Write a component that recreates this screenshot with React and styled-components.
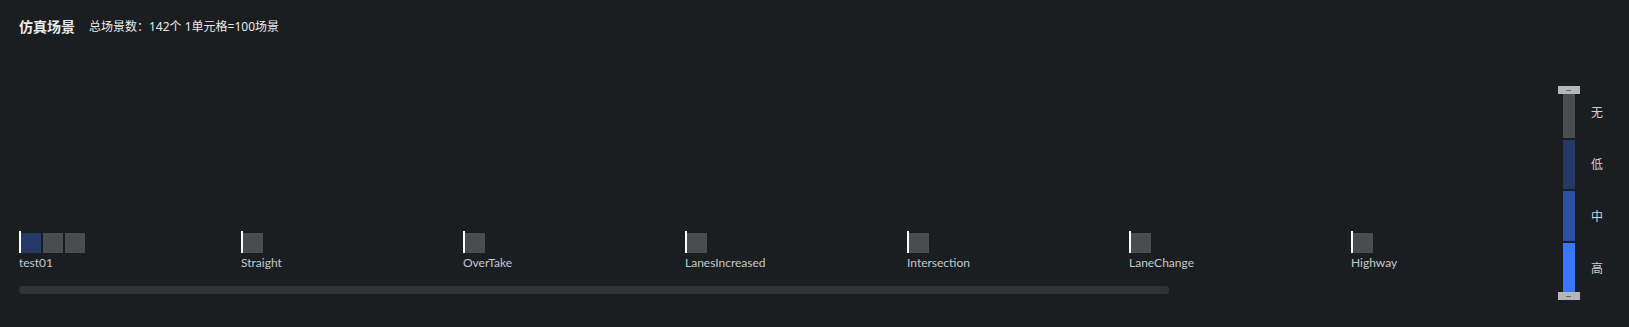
import React from 'react';
import styled, { createGlobalStyle } from 'styled-components';

const GlobalStyle = createGlobalStyle`
  body {
    margin: 0;
    background: #1b1e21;
    font-family: "Noto Sans", "Noto Sans CJK SC", sans-serif;
  }
`;

const Page = styled.div`
  padding: 17px 26px 0 19px;
  box-sizing: border-box;
  width: 100%;
  height: 327px;
  background: #1b1e21;
`;

const Header = styled.div`
  display: flex;
  align-items: center;
  height: 18px;
  gap: 14px;
  color: #e8eaec;
`;

const Title = styled.span`
  font-size: 14px;
  font-weight: 600;
`;

const Summary = styled.span`
  font-size: 12px;
`;

const Body = styled.div`
  display: flex;
  align-items: flex-end;
  height: 265px;
  gap: 20px;
`;

const Track = styled.div`
  flex: 1;
  min-width: 0;
  padding-bottom: 6px;
`;

const ItemRow = styled.div`
  display: flex;
  overflow: hidden;
`;

const Item = styled.div`
  flex: 0 0 222px;
  display: flex;
  flex-direction: column;
`;

const Cells = styled.div`
  display: flex;
  align-items: flex-end;
  height: 22px;
  gap: 2px;
`;

const Marker = styled.div`
  width: 2px;
  height: 22px;
  background: #ffffff;
  margin-right: -2px;
`;

const Cell = styled.div`
  width: 20px;
  height: 20px;
  background: ${p => p.$color};
`;

const ItemLabel = styled.div`
  margin-top: 2px;
  font-family: Lato, "Noto Sans", sans-serif;
  font-size: 12px;
  line-height: 16px;
  color: #c3c8cd;
`;

const ScrollBar = styled.div`
  margin-top: 15px;
  width: 1150px;
  height: 8px;
  border-radius: 4px;
  background: #2f3336;
`;

const Legend = styled.div`
  display: flex;
  gap: 11px;
`;

const Slider = styled.div`
  width: 22px;
  display: flex;
  flex-direction: column;
  align-items: center;
`;

const Handle = styled.div`
  width: 22px;
  height: 8px;
  background: #b6b6b6;
  display: flex;
  align-items: center;
  justify-content: center;
  &::after {
    content: '';
    width: 5px;
    height: 1px;
    background: #6a6a6a;
  }
`;

const Bar = styled.div`
  width: 12px;
  display: flex;
  flex-direction: column;
  gap: 2px;
`;

const Segment = styled.div`
  height: ${p => p.$h}px;
  background: ${p => p.$color};
`;

const Labels = styled.div`
  display: flex;
  flex-direction: column;
`;

const LevelLabel = styled.div`
  height: 52px;
  display: flex;
  align-items: center;
  font-size: 12px;
  color: #cfd2d5;
`;

const GREY = '#4a4d50';

const scenes = [
  { name: 'test01', cells: ['#243968', GREY, GREY] },
  { name: 'Straight', cells: [GREY] },
  { name: 'OverTake', cells: [GREY] },
  { name: 'LanesIncreased', cells: [GREY] },
  { name: 'Intersection', cells: [GREY] },
  { name: 'LaneChange', cells: [GREY] },
  { name: 'Highway', cells: [GREY] },
];

const levels = [
  { label: '无', color: '#4a4d50', h: 44 },
  { label: '低', color: '#243968', h: 49 },
  { label: '中', color: '#2b4fa3', h: 50 },
  { label: '高', color: '#3a76ff', h: 49 },
];

export default function App() {
  return (
    <>
      <GlobalStyle />
      <Page>
        <Header>
          <Title>仿真场景</Title>
          <Summary>总场景数：142个 1单元格=100场景</Summary>
        </Header>
        <Body>
          <Track>
            <ItemRow>
              {scenes.map(scene => (
                <Item key={scene.name}>
                  <Cells>
                    <Marker />
                    {scene.cells.map((c, i) => (
                      <Cell key={i} $color={c} />
                    ))}
                  </Cells>
                  <ItemLabel>{scene.name}</ItemLabel>
                </Item>
              ))}
            </ItemRow>
            <ScrollBar />
          </Track>
          <Legend>
            <Slider>
              <Handle />
              <Bar>
                {levels.map(l => (
                  <Segment key={l.label} $h={l.h} $color={l.color} />
                ))}
              </Bar>
              <Handle />
            </Slider>
            <Labels>
              {levels.map(l => (
                <LevelLabel key={l.label}>{l.label}</LevelLabel>
              ))}
            </Labels>
          </Legend>
        </Body>
      </Page>
    </>
  );
}
